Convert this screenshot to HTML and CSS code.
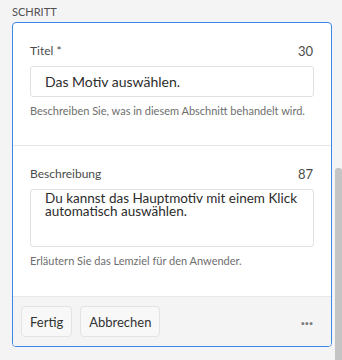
FILE: index.html
```html
<!DOCTYPE html>
<html lang="de">
<head>
<meta charset="utf-8">
<link rel="stylesheet" href="styles.css">
</head>
<body>
<div class="panel">
  <div class="section-label">SCHRITT</div>
  <div class="card">
    <div class="field first">
      <div class="field-head"><span>Titel *</span><span class="count">30</span></div>
      <div class="input">Das Motiv auswählen.</div>
      <div class="help">Beschreiben Sie, was in diesem Abschnitt behandelt wird.</div>
    </div>
    <div class="field second">
      <div class="field-head"><span>Beschreibung</span><span class="count">87</span></div>
      <div class="textarea">Du kannst das Hauptmotiv mit einem Klick automatisch auswählen.</div>
      <div class="help">Erläutern Sie das Lemziel für den Anwender.</div>
    </div>
    <div class="footer">
      <button class="btn">Fertig</button>
      <button class="btn">Abbrechen</button>
      <span class="more">&middot;&middot;&middot;</span>
    </div>
  </div>
  <div class="scroll-thumb"></div>
</div>
</body>
</html>
```
FILE: styles.css
```css
html, body {
  margin: 0;
  padding: 0;
  background: #f4f4f4;
}
body {
  font-family: "Lato", "Open Sans", sans-serif;
  color: #4b4b4b;
  width: 342px;
  height: 360px;
  overflow: hidden;
}
.panel {
  position: relative;
  height: 360px;
  padding: 5px 0 0 12px;
  box-sizing: border-box;
}
.section-label {
  font-size: 11px;
  line-height: 14px;
  color: #505050;
  height: 17px;
}
.card {
  width: 320px;
  height: 325px;
  box-sizing: border-box;
  border: 1px solid #3d87e6;
  border-radius: 4px;
  background: #fff;
  display: flex;
  flex-direction: column;
  overflow: hidden;
}
.field {
  padding: 0 17px;
}
.field.first {
  padding-top: 20px;
  height: 123px;
  box-sizing: border-box;
  border-bottom: 1px solid #e8e8e8;
}
.field.second {
  padding-top: 20px;
  flex: 1;
}
.field-head {
  display: flex;
  justify-content: space-between;
  font-size: 12px;
  line-height: 16px;
  color: #4b4b4b;
}
.count {
  font-size: 13px;
  padding-right: 1px;
}
.input {
  margin-top: 7px;
  height: 31px;
  box-sizing: border-box;
  border: 1px solid #e1e1e1;
  border-radius: 3px;
  padding: 0 14px;
  font-size: 14px;
  line-height: 29px;
  color: #2c2c2c;
}
.textarea {
  margin-top: 7px;
  height: 58px;
  box-sizing: border-box;
  border: 1px solid #e1e1e1;
  border-radius: 3px;
  padding: 2px 4px 0 14px;
  font-size: 13.5px;
  line-height: 13px;
  color: #2c2c2c;
}
.help {
  margin-top: 6px;
  font-size: 11px;
  line-height: 15px;
  color: #6e6e6e;
}
.footer {
  height: 50px;
  box-sizing: border-box;
  border-top: 1px solid #e8e8e8;
  background: #f4f4f4;
  display: flex;
  align-items: center;
  padding: 0 18px 0 8px;
  gap: 8px;
}
.btn {
  height: 31px;
  border: 1px solid #e3e3e3;
  border-radius: 4px;
  background: #f8f8f8;
  font-family: "Lato", "Open Sans", sans-serif;
  font-size: 13px;
  color: #323232;
  padding: 0 8px;
}
.more {
  margin-left: auto;
  font-size: 15px;
  font-weight: bold;
  color: #7a7a7a;
}
.scroll-thumb {
  position: absolute;
  right: 0;
  top: 168px;
  bottom: 0;
  width: 7px;
  background: #c4c4c4;
  border-radius: 3px 3px 0 0;
}
```
